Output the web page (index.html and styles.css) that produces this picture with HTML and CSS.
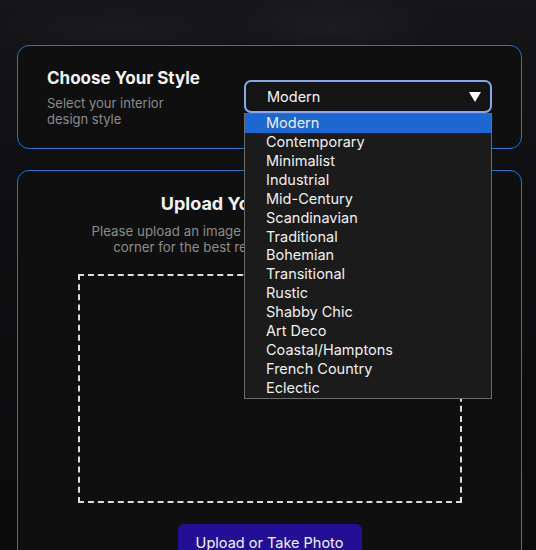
FILE: index.html
```html
<!DOCTYPE html>
<html lang="en">
<head>
<meta charset="utf-8">
<title>Choose Your Style</title>
<link rel="stylesheet" href="styles.css">
</head>
<body>
<main class="page">
  <section class="card style-card">
    <div class="style-text">
      <h2 class="style-title">Choose Your Style</h2>
      <p class="style-sub">Select your interior design style</p>
    </div>
    <div class="select-wrap">
      <div class="select">
        <span class="select-value">Modern</span>
        <svg class="select-arrow" width="12" height="10" viewBox="0 0 12 10"><path d="M0 0 H12 L6 10 Z" fill="#fff"/></svg>
      </div>
      <ul class="options">
        <li class="option selected">Modern</li>
        <li class="option">Contemporary</li>
        <li class="option">Minimalist</li>
        <li class="option">Industrial</li>
        <li class="option">Mid-Century</li>
        <li class="option">Scandinavian</li>
        <li class="option">Traditional</li>
        <li class="option">Bohemian</li>
        <li class="option">Transitional</li>
        <li class="option">Rustic</li>
        <li class="option">Shabby Chic</li>
        <li class="option">Art Deco</li>
        <li class="option">Coastal/Hamptons</li>
        <li class="option">French Country</li>
        <li class="option">Eclectic</li>
      </ul>
    </div>
  </section>

  <section class="card upload-card">
    <h2 class="upload-title">Upload Your Room Photo</h2>
    <p class="upload-desc">Please upload an image of your entire room taken from a corner for the best results and a clearer overview.</p>
    <div class="dropzone"></div>
    <button class="upload-btn" type="button">Upload or Take Photo</button>
  </section>
</main>
</body>
</html>
```

FILE: styles.css
```css
* { box-sizing: border-box; }

html, body {
  margin: 0;
  height: 100%;
}

body {
  font-family: Inter, "Noto Sans", sans-serif;
  color: #fff;
  background:
    radial-gradient(ellipse 160px 50px at 330px 25px, rgba(44,44,50,0.35), transparent 70%),
    radial-gradient(ellipse 200px 40px at 120px 30px, rgba(34,34,38,0.4), transparent 70%),
    linear-gradient(180deg, #161618 0, #131315 60px, #0f0f11 200px, #0b0b0c 100%);
  overflow: hidden;
}

.page {
  padding: 45px 14px 0 17px;
  display: flex;
  flex-direction: column;
  gap: 21px;
}

.card {
  background: #0f0f0f;
  border: 1px solid #2a74c9;
  border-radius: 12px;
}

.style-card {
  height: 104px;
  display: flex;
  align-items: center;
  justify-content: space-between;
  padding: 0 29px 0 29px;
}

.style-title {
  margin: 0 0 7px;
  font-size: 17px;
  line-height: 20px;
  font-weight: 700;
  color: #f2f2f2;
}

.style-sub {
  margin: 0;
  max-width: 130px;
  font-size: 13px;
  line-height: 16px;
  color: #8c8c8c;
}

.select-wrap {
  position: relative;
  width: 248px;
  margin-top: -1px;
}

.select {
  height: 33px;
  border: 2px solid #8aa5ec;
  border-radius: 7px;
  background: #141414;
  display: flex;
  align-items: center;
  justify-content: space-between;
  padding: 0 9px 0 21px;
}

.select-value {
  font-size: 14.5px;
  color: #f4f4f4;
}

.select-arrow {
  display: block;
}

.options {
  position: absolute;
  top: 33px;
  left: 0;
  width: 248px;
  margin: 0;
  padding: 0;
  list-style: none;
  background: #1b1b1b;
  border: 1px solid #6c6c6c;
  z-index: 10;
}

.option {
  height: 18.93px;
  line-height: 18.93px;
  padding-left: 21px;
  font-size: 14.5px;
  color: #f0f0f0;
}

.option.selected {
  background: #1c67d2;
}

.upload-card {
  height: 420px;
  display: flex;
  flex-direction: column;
  align-items: center;
  padding-top: 22px;
}

.upload-title {
  margin: 0 0 8px;
  font-size: 18px;
  line-height: 22px;
  font-weight: 700;
  color: #f2f2f2;
}

.upload-desc {
  margin: 0 0 19px;
  max-width: 370px;
  text-align: center;
  font-size: 13.3px;
  line-height: 16px;
  color: #8c8c8c;
}

.dropzone {
  width: 384px;
  height: 229px;
  border: 2px dashed #dcdcdc;
}

.upload-btn {
  margin-top: 21px;
  width: 184px;
  height: 40px;
  border: none;
  border-radius: 6px;
  background: #230f96;
  color: #f2f2f2;
  font-family: Inter, "Noto Sans", sans-serif;
  font-size: 14.5px;
  padding: 0 0 3px;
}
```
